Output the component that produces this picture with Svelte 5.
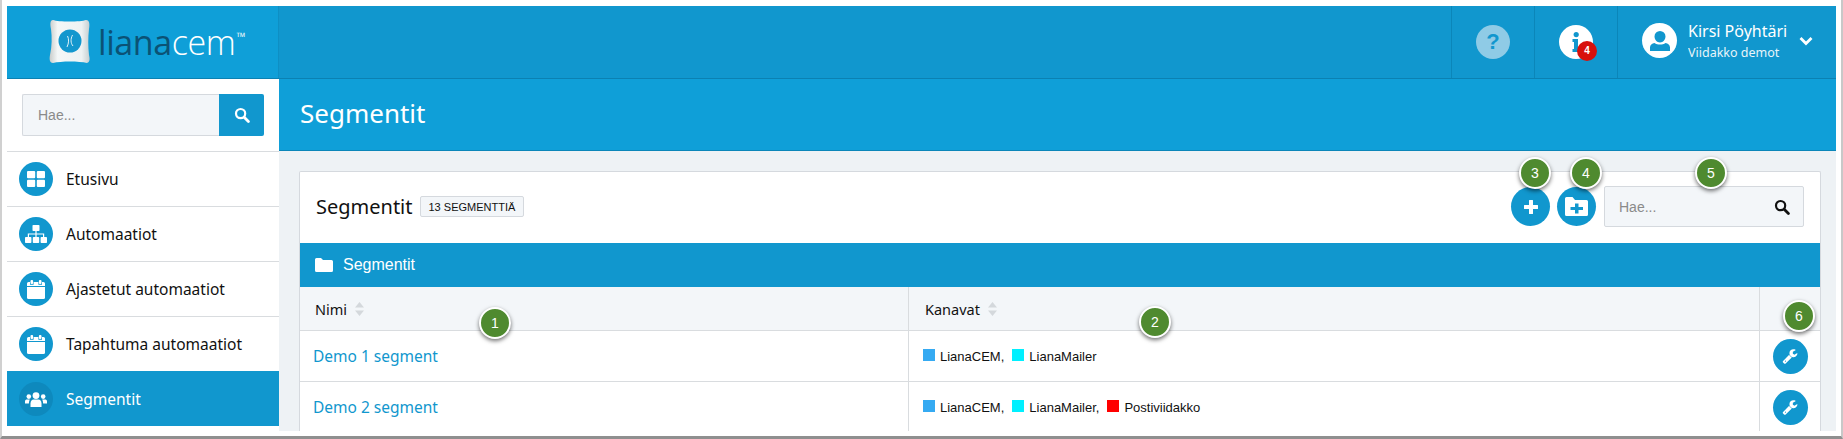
<script lang="ts">
	const menu = [
		{ label: 'Etusivu', icon: 'grid' },
		{ label: 'Automaatiot', icon: 'sitemap' },
		{ label: 'Ajastetut automaatiot', icon: 'calendar' },
		{ label: 'Tapahtuma automaatiot', icon: 'calendar' },
		{ label: 'Segmentit', icon: 'users', active: true }
	];

	const rows = [
		{ name: 'Demo 1 segment', channels: ['cem', 'mailer'] },
		{ name: 'Demo 2 segment', channels: ['cem', 'mailer', 'posti'] }
	];

	const channelInfo: Record<string, { label: string; color: string }> = {
		cem: { label: 'LianaCEM', color: '#35aaf2' },
		mailer: { label: 'LianaMailer', color: '#00f0ff' },
		posti: { label: 'Postiviidakko', color: '#ff0000' }
	};

	const pins = [
		{ n: 1, x: 479, y: 307 },
		{ n: 2, x: 1139, y: 306 },
		{ n: 3, x: 1519, y: 157 },
		{ n: 4, x: 1570, y: 157 },
		{ n: 5, x: 1695, y: 157 },
		{ n: 6, x: 1783, y: 300 }
	];

	const wrench =
		'M448 1472q0-26-19-45t-45-19-45 19-19 45 19 45 45 19 45-19 19-45zm644-420l-682 682q-37 37-90 37-52 0-91-37l-106-108q-38-36-38-90 0-53 38-91l681-681q39 98 114.5 173.5t173.5 114.5zm634-435q0 39-23 106-47 134-164.5 217.5t-258.5 83.5q-185 0-316.5-131.5t-131.5-316.5 131.5-316.5 316.5-131.5q58 0 121.5 16.5t107.5 46.5q16 11 16 28t-16 28l-293 169v224l193 107q5-3 79-48.5t135.5-81 70.5-35.5q15 0 23.5 10t8.5 25z';
</script>

{#snippet searchIcon(color: string)}
	<svg width="16" height="16" viewBox="0 0 16 16" fill="none" stroke={color}>
		<circle cx="6.6" cy="6.6" r="4.6" stroke-width="2.2" />
		<path d="M10.2 10.2l4.2 4.2" stroke-width="2.8" stroke-linecap="round" />
	</svg>
{/snippet}

{#snippet menuIcon(name: string)}
	{#if name === 'grid'}
		<svg width="18" height="16" viewBox="0 0 18 16" fill="#fff">
			<rect width="8.2" height="7.2" rx="1" />
			<rect x="9.8" width="8.2" height="7.2" rx="1" />
			<rect y="8.8" width="8.2" height="7.2" rx="1" />
			<rect x="9.8" y="8.8" width="8.2" height="7.2" rx="1" />
		</svg>
	{:else if name === 'sitemap'}
		<svg width="22" height="18" viewBox="0 0 22 18" fill="#fff">
			<rect x="7.5" width="7" height="6" rx=".8" />
			<rect y="12" width="6.4" height="6" rx=".8" />
			<rect x="7.8" y="12" width="6.4" height="6" rx=".8" />
			<rect x="15.6" y="12" width="6.4" height="6" rx=".8" />
			<path d="M10.4 6h1.2v2.4h7.6V12H18V9.6h-6.4V12h-1.2V9.6H4V12H2.800V8.400h7.600z" />
		</svg>
	{:else if name === 'calendar'}
		<svg width="18" height="19" viewBox="0 0 18 19" fill="#fff">
			<rect x="3.500" width="2.600" height="4" rx="1" />
			<rect x="11.900" width="2.600" height="4" rx="1" />
			<path d="M1.500 2H3v2.800h3.600V2h4.800v2.800H15V2h1.500A1.500 1.500 0 0 1 18 3.500V6H0V3.500A1.500 1.500 0 0 1 1.500 2z" />
			<path d="M0 7h18v10.500a1.500 1.500 0 0 1-1.500 1.500h-15A1.500 1.500 0 0 1 0 17.500z" />
		</svg>
	{:else}
		<svg width="22" height="15" viewBox="0 0 22 15" fill="#fff">
			<circle cx="11" cy="3.600" r="3.400" />
			<circle cx="3.800" cy="4.600" r="2.300" />
			<circle cx="18.200" cy="4.600" r="2.300" />
			<path d="M5.500 15v-3.600C5.500 9 7 7.600 8.500 7.600h5c1.500 0 3 1.400 3 3.800V15z" />
			<path d="M0 11.500V9.200C0 8 .9 7.500 2 7.500h2.800c-.5 1-.9 2.200-.9 3.600v.4z" />
			<path d="M22 11.500V9.200c0-1.200-.9-1.700-2-1.700h-2.800c.5 1 .9 2.200.9 3.600v.4z" />
		</svg>
	{/if}
{/snippet}

<div class="shot">
	<div class="app">
		<header class="topbar">
			<div class="logo">
				<svg class="jar" width="42" height="46" viewBox="0 0 42 46">
					<defs>
						<linearGradient id="jarfill" x1="0" x2="1" y1="0" y2="0">
							<stop offset="0" stop-color="#c9ccca" />
							<stop offset=".2" stop-color="#f4f7f7" />
							<stop offset=".8" stop-color="#edf2f3" />
							<stop offset="1" stop-color="#c6cfd1" />
						</linearGradient>
					</defs>
					<path d="M4 1c5 2 28 2 33 0 3 0 4 3 3 9-1 9-1 17 0 26 1 4 1 7-2 8-8-2-26-2-34 0-3 0-4-3-3-8 2-9 2-18 1-26C1 5 1 1 4 1z" fill="url(#jarfill)" />
					<circle cx="21" cy="22" r="11.500" fill="#1397ce" />
					<path d="M18.500 17c1.500 3 1.500 7-.5 11M23.500 16c-2 4-2 8 .5 11" stroke="#dff1f8" stroke-width="1" fill="none" />
				</svg>
				<span class="wordmark"><span class="liana">liana</span>cem<sup>™</sup></span>
			</div>
			<div class="topbar-right">
				<div class="top-cell">
					<span class="round help">?</span>
				</div>
				<div class="top-cell">
					<span class="round info">
						<svg width="8" height="20" viewBox="0 0 8 20" fill="#1197ce">
							<circle cx="4.200" cy="2.600" r="2.600" />
							<path d="M.5 7h5.500v10h1.500v3H.5v-3H2v-7H.5z" />
						</svg>
						<b class="count">4</b>
					</span>
				</div>
				<div class="user">
					<span class="avatar">
						<svg width="20" height="21" viewBox="0 0 20 21" fill="#1197ce">
							<path d="M10 1a5.500 5.500 0 0 1 5.500 5.500c0 3-2.500 6-5.500 6s-5.500-3-5.500-6A5.500 5.500 0 0 1 10 1z" />
							<path d="M0 21v-3.500c0-2.500 2-4 4.500-4.500 1.500 1 3.500 1.500 5.500 1.500s4-.5 5.500-1.500c2.500.5 4.500 2 4.500 4.500V21z" />
						</svg>
					</span>
					<span class="user-text">
						<span class="user-name">Kirsi Pöyhtäri</span>
						<span class="user-org">Viidakko demot</span>
					</span>
					<svg class="chevron" width="14" height="10" viewBox="0 0 14 10" fill="none" stroke="#fff" stroke-width="2.800">
						<path d="M1.500 2l5.500 5.500L12.500 2" />
					</svg>
				</div>
			</div>
		</header>

		<div class="body">
			<aside class="sidebar">
				<div class="side-search">
					<div class="side-input">Hae...</div>
					<div class="side-btn">{@render searchIcon('#fff')}</div>
				</div>
				<nav>
					{#each menu as item}
						<div class="menu-item" class:active={item.active}>
							<span class="menu-icon">{@render menuIcon(item.icon)}</span>
							<span>{item.label}</span>
						</div>
					{/each}
				</nav>
			</aside>

			<main class="main">
				<div class="page-title">Segmentit</div>
				<div class="content">
					<section class="card">
						<div class="card-head">
							<h2>Segmentit</h2>
							<span class="tag">13 segmenttiä</span>
							<div class="actions">
								<span class="btn">
									<svg width="14" height="14" viewBox="0 0 14 14" fill="#fff">
										<path d="M5 .5a.5.5 0 0 1 .5-.5h3a.5.5 0 0 1 .5.5V5h4.500a.5.5 0 0 1 .5.5v3a.5.5 0 0 1-.5.5H9v4.500a.5.5 0 0 1-.5.5h-3a.5.5 0 0 1-.5-.5V9H.5a.5.5 0 0 1-.5-.5v-3A.5.5 0 0 1 .5 5H5z" />
									</svg>
								</span>
								<span class="btn">
									<svg width="23" height="19" viewBox="0 0 23 19" fill="#fff">
										<path fill-rule="evenodd" d="M1.500 0h6l2.500 3h11.500A1.500 1.500 0 0 1 23 4.500v13a1.500 1.500 0 0 1-1.500 1.500h-20A1.500 1.500 0 0 1 0 17.500v-16A1.500 1.500 0 0 1 1.500 0zM10 6.500V10H5.500v3H10v3.500h3.500V13H18v-3h-4.500V6.500z" />
									</svg>
								</span>
								<div class="card-search">
									<span>Hae...</span>
									{@render searchIcon('#111')}
								</div>
							</div>
						</div>

						<div class="folder">
							<svg width="18" height="14" viewBox="0 0 18 14" fill="#fff">
								<path d="M1.500 0h4.500l2 2h8.500A1.500 1.500 0 0 1 18 3.500v9a1.500 1.500 0 0 1-1.500 1.500h-15A1.500 1.500 0 0 1 0 12.500v-11A1.500 1.500 0 0 1 1.500 0z" />
							</svg>
							<span>Segmentit</span>
						</div>

						<div class="table">
							<div class="cell head first">
								Nimi
								<svg class="sort" width="9" height="14" viewBox="0 0 9 14" fill="#d4d8dc"><path d="M4.500 0L9 5.500H0zM4.500 14L0 8.500h9z" /></svg>
							</div>
							<div class="cell head second">
								Kanavat
								<svg class="sort" width="9" height="14" viewBox="0 0 9 14" fill="#d4d8dc"><path d="M4.500 0L9 5.500H0zM4.500 14L0 8.500h9z" /></svg>
							</div>
							<div class="cell head third"></div>

							{#each rows as row}
								<div class="cell first"><span class="link">{row.name}</span></div>
								<div class="cell second channels">
									{#each row.channels as c, i}
										<span class="channel">
											<i style="background: {channelInfo[c].color}"></i>{channelInfo[c].label}{i < row.channels.length - 1 ? ',' : ''}
										</span>
									{/each}
								</div>
								<div class="cell third">
									<span class="tool">
										<svg width="16" height="16" viewBox="0 0 1792 1792" fill="#fff"><path d={wrench} /></svg>
									</span>
								</div>
							{/each}
						</div>
					</section>
				</div>
			</main>
		</div>

		{#each pins as pin}
			<span class="pin" style="left: {pin.x - 7}px; top: {pin.y - 6}px">{pin.n}</span>
		{/each}
	</div>
</div>

<style>
	:global(body) {
		margin: 0;
		background: #fff;
	}

	.shot {
		box-sizing: border-box;
		width: 1843px;
		height: 439px;
		padding: 6px 7px 8px 7px;
		background: #fff;
		border-left: 2px solid #d0d0d0;
		border-right: 2px solid #c8c8c8;
		border-bottom: 3px solid #8f8f8f;
		padding-left: 5px;
		padding-right: 5px;
		padding-bottom: 5px;
		font-family: 'Noto Sans', sans-serif;
	}

	.app {
		position: relative;
		height: 425px;
		overflow: hidden;
		display: flex;
		flex-direction: column;
	}

	.topbar {
		flex: none;
		display: flex;
		height: 73px;
		background: #1197ce;
		border-bottom: 1px solid #0b81b2;
		box-sizing: border-box;
	}

	.logo {
		width: 272px;
		display: flex;
		align-items: center;
		padding-left: 42px;
		box-sizing: border-box;
		background: #0f9fd8;
		border-right: 1px solid #0e8fc4;
		gap: 7px;
	}

	.wordmark {
		font-family: 'Open Sans', sans-serif;
		font-weight: 300;
		font-size: 34px;
		color: #fff;
		letter-spacing: -0.4px;
		line-height: 1;
	}

	.liana {
		color: #0b5275;
		font-weight: 400;
	}

	.wordmark sup {
		font-size: 12px;
		font-weight: 700;
		vertical-align: 14px;
		line-height: 0;
		color: #dfeff7;
		margin-left: 1px;
	}

	.topbar-right {
		margin-left: auto;
		display: flex;
	}

	.top-cell {
		width: 83px;
		border-left: 1px solid #0b86b9;
		box-sizing: border-box;
		display: flex;
		align-items: center;
		justify-content: center;
	}

	.round {
		position: relative;
		width: 34px;
		height: 34px;
		border-radius: 50%;
		display: flex;
		align-items: center;
		justify-content: center;
	}

	.help {
		background: #8fcbe6;
		color: #1197ce;
		font: 700 22px 'Liberation Sans', sans-serif;
	}

	.info {
		background: #fff;
	}

	.count {
		position: absolute;
		right: -4px;
		bottom: -2px;
		width: 20px;
		height: 20px;
		border-radius: 50%;
		background: #d8100c;
		color: #fff;
		font: 700 10px/20px 'Liberation Sans', sans-serif;
		text-align: center;
	}

	.user {
		width: 219px;
		border-left: 1px solid #0b86b9;
		box-sizing: border-box;
		display: flex;
		align-items: center;
		padding-left: 24px;
		color: #fff;
	}

	.avatar {
		width: 35px;
		height: 35px;
		border-radius: 50%;
		background: #fff;
		display: flex;
		align-items: center;
		justify-content: center;
		overflow: hidden;
		margin-top: -3px;
	}

	.user-text {
		display: flex;
		flex-direction: column;
		margin-left: 11px;
		margin-top: -2px;
	}

	.user-name {
		font-size: 16px;
		line-height: 23px;
	}

	.user-org {
		font-size: 12.500px;
		line-height: 20px;
		opacity: 0.9;
	}

	.chevron {
		margin-left: 12px;
		margin-top: -3px;
	}

	.body {
		flex: 1;
		display: flex;
		min-height: 0;
	}

	.sidebar {
		flex: none;
		width: 272px;
		background: #fff;
	}

	.side-search {
		display: flex;
		height: 42px;
		margin: 15px 15px 15px 15px;
		box-sizing: border-box;
	}

	.side-input {
		flex: 1;
		box-sizing: border-box;
		border: 1px solid #d5d9de;
		border-right: none;
		border-radius: 2px 0 0 2px;
		background: #f3f6f9;
		color: #8a8a8a;
		font: 14px/40px 'Liberation Sans', sans-serif;
		padding-left: 15px;
	}

	.side-btn {
		width: 45px;
		background: #1197ce;
		border-radius: 0 2px 2px 0;
		display: flex;
		align-items: center;
		justify-content: center;
	}

	.menu-item {
		height: 55px;
		box-sizing: border-box;
		border-top: 1px solid #d9dcdf;
		display: flex;
		align-items: center;
		gap: 13px;
		padding-left: 12px;
		font-size: 15.500px;
		color: #111;
	}

	.menu-item.active {
		background: #1197ce;
		color: #fff;
		border-top-color: #1197ce;
	}

	.menu-icon {
		width: 34px;
		height: 34px;
		border-radius: 50%;
		background: #1197ce;
		display: flex;
		align-items: center;
		justify-content: center;
	}

	.active .menu-icon {
		background: #0e89bd;
	}

	.main {
		flex: 1;
		min-width: 0;
		background: #eef2f5;
		display: flex;
		flex-direction: column;
	}

	.page-title {
		flex: none;
		height: 72px;
		box-sizing: border-box;
		background: #0f9fd8;
		border-bottom: 1px solid #0b86b9;
		color: #fff;
		font-size: 26px;
		line-height: 68px;
		padding-left: 21px;
	}

	.content {
		padding: 20px 15px 0 20px;
	}

	.card {
		background: #fff;
		border: 1px solid #d5d9de;
		border-bottom: none;
		border-radius: 2px 2px 0 0;
	}

	.card-head {
		height: 71px;
		box-sizing: border-box;
		display: flex;
		align-items: center;
		padding: 0 16px 2px 16px;
	}

	h2 {
		margin: 0;
		font-size: 20px;
		font-weight: 400;
		color: #111;
	}

	.tag {
		margin-left: 7px;
		padding: 0 8px;
		height: 21px;
		border: 1px solid #d5d9de;
		border-radius: 2px;
		background: #f3f6f9;
		font: 11px/20px 'Liberation Sans', sans-serif;
		text-transform: uppercase;
		color: #111;
		box-sizing: border-box;
	}

	.actions {
		margin-left: auto;
		display: flex;
		align-items: center;
		gap: 7px;
	}

	.btn {
		width: 39px;
		height: 39px;
		border-radius: 50%;
		background: #1197ce;
		display: flex;
		align-items: center;
		justify-content: center;
	}

	.card-search {
		width: 200px;
		height: 41px;
		margin-left: 1px;
		box-sizing: border-box;
		border: 1px solid #d5d9de;
		border-radius: 2px;
		background: #f3f6f9;
		color: #8a8a8a;
		font: 14px 'Liberation Sans', sans-serif;
		display: flex;
		align-items: center;
		justify-content: space-between;
		padding: 0 13px 0 14px;
	}

	.folder {
		height: 44px;
		background: #1197ce;
		color: #fff;
		font: 16px 'Liberation Sans', sans-serif;
		display: flex;
		align-items: center;
		gap: 10px;
		padding-left: 15px;
	}

	.table {
		display: grid;
		grid-template-columns: 608px 851px 1fr;
	}

	.cell {
		height: 51px;
		box-sizing: border-box;
		border-bottom: 1px solid #d9dcdf;
		display: flex;
		align-items: center;
	}

	.head {
		height: 44px;
		background: #f3f6f9;
		font-size: 14.500px;
		color: #111;
	}

	.first {
		padding-left: 13px;
	}

	.head.first {
		padding-left: 15px;
	}

	.second {
		border-left: 1px solid #d9dcdf;
		padding-left: 14px;
	}

	.head.second {
		padding-left: 16px;
	}

	.third {
		border-left: 1px solid #d9dcdf;
		justify-content: center;
	}

	.sort {
		margin-left: 8px;
	}

	.link {
		color: #1197ce;
		font-size: 15.500px;
	}

	.channels {
		font: 13px 'Liberation Sans', sans-serif;
		color: #111;
		gap: 8px;
	}

	.channel {
		display: inline-flex;
		align-items: center;
	}

	.channel i {
		width: 12px;
		height: 12px;
		margin-right: 5px;
		margin-top: -2px;
	}

	.tool {
		width: 35px;
		height: 35px;
		border-radius: 50%;
		background: #1197ce;
		display: flex;
		align-items: center;
		justify-content: center;
	}

	.pin {
		position: absolute;
		width: 32px;
		height: 32px;
		box-sizing: border-box;
		border: 2px solid #fff;
		border-radius: 50%;
		background: #4f8a2f;
		color: #fff;
		font: 14px/28px 'Liberation Sans', sans-serif;
		text-align: center;
		box-shadow: 0 2px 4px rgba(0, 0, 0, 0.55);
	}
</style>
